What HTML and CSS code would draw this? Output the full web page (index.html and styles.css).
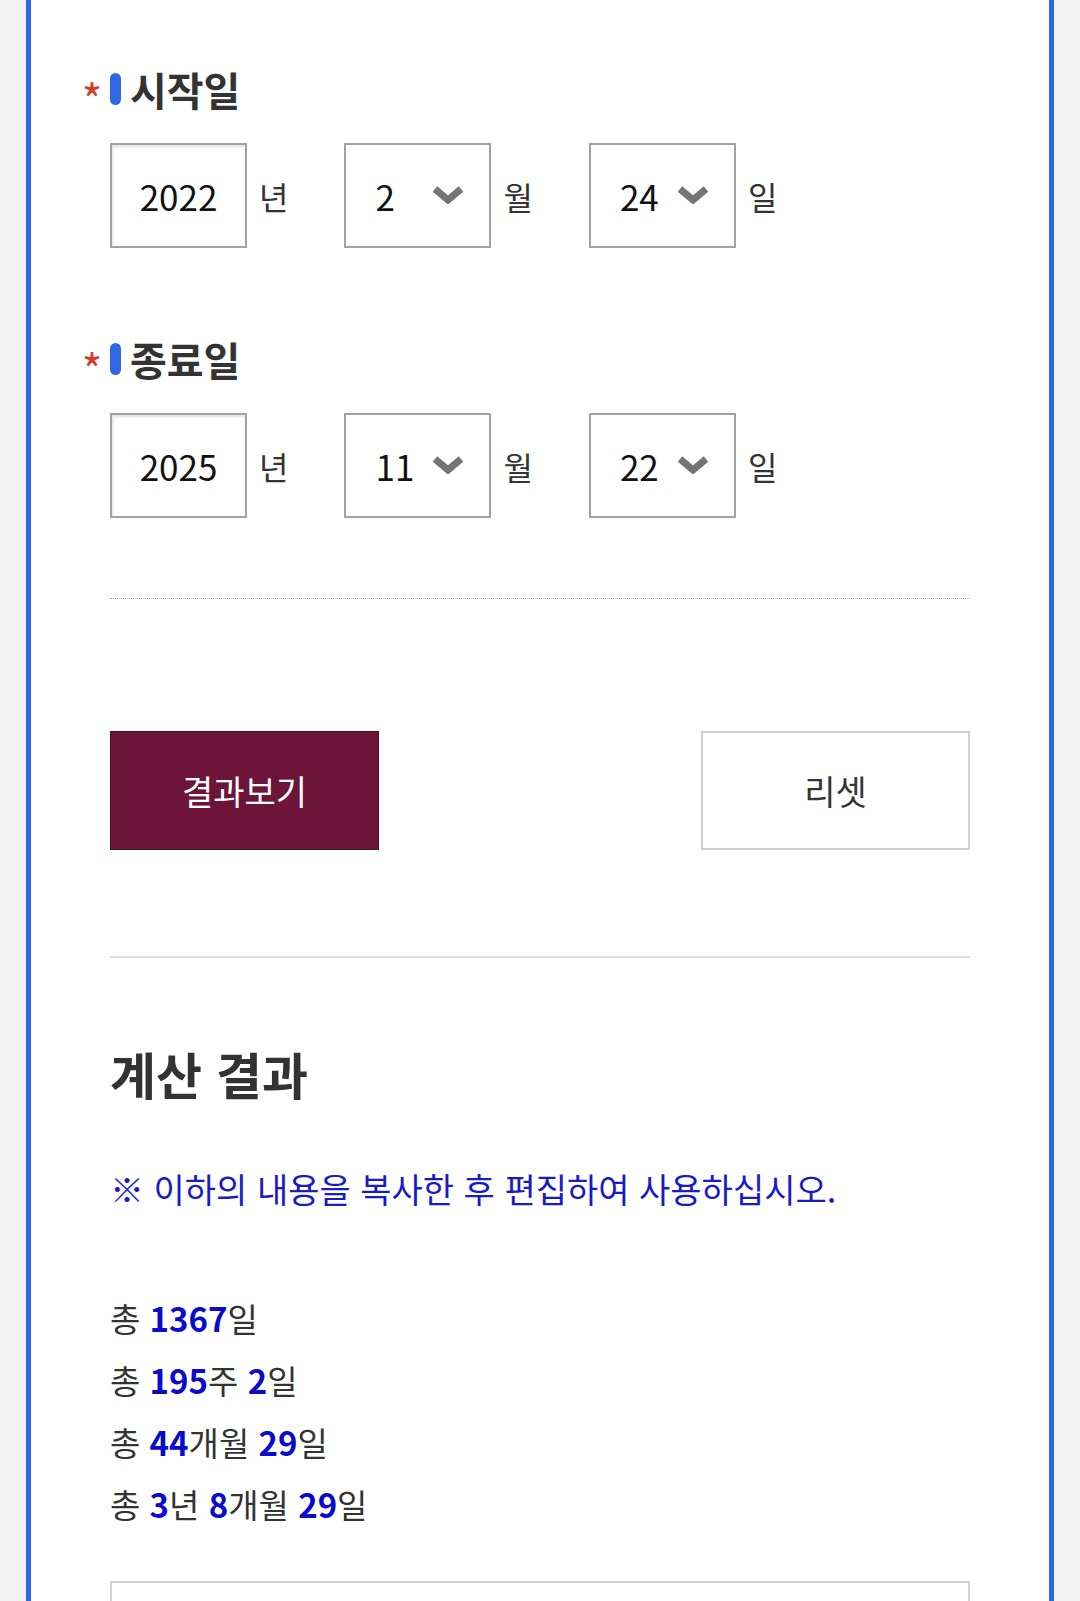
FILE: index.html
```html
<!DOCTYPE html>
<html lang="ko">
<head>
    <meta charset="UTF-8">
    <meta name="viewport" content="width=device-width, initial-scale=1.0">
    <title>날짜 계산기</title>
    <link rel="stylesheet" href="styles.css">
</head>
<body>
    <div class="page">
        <div class="card">
            <div class="field">
                <div class="label"><span class="req">*</span><span class="bar"></span><span class="label-text">시작일</span></div>
                <div class="date-row">
                    <input type="text" class="year" value="2022"><span class="unit">년</span>
                    <div class="sel">
                        <select><option>2</option></select>
                        <svg class="chev" width="32" height="18" viewBox="0 0 32 18"><polyline points="3,3 16,14 29,3" fill="none" stroke="#747474" stroke-width="7"/></svg>
                    </div><span class="unit">월</span>
                    <div class="sel">
                        <select><option>24</option></select>
                        <svg class="chev" width="32" height="18" viewBox="0 0 32 18"><polyline points="3,3 16,14 29,3" fill="none" stroke="#747474" stroke-width="7"/></svg>
                    </div><span class="unit">일</span>
                </div>
            </div>

            <div class="field second">
                <div class="label"><span class="req">*</span><span class="bar"></span><span class="label-text">종료일</span></div>
                <div class="date-row">
                    <input type="text" class="year" value="2025"><span class="unit">년</span>
                    <div class="sel">
                        <select><option>11</option></select>
                        <svg class="chev" width="32" height="18" viewBox="0 0 32 18"><polyline points="3,3 16,14 29,3" fill="none" stroke="#747474" stroke-width="7"/></svg>
                    </div><span class="unit">월</span>
                    <div class="sel">
                        <select><option>22</option></select>
                        <svg class="chev" width="32" height="18" viewBox="0 0 32 18"><polyline points="3,3 16,14 29,3" fill="none" stroke="#747474" stroke-width="7"/></svg>
                    </div><span class="unit">일</span>
                </div>
            </div>

            <hr class="dots">

            <div class="buttons">
                <button class="btn-go">결과보기</button>
                <button class="btn-reset">리셋</button>
            </div>

            <hr class="line">

            <h2>계산 결과</h2>
            <p class="notice">※ 이하의 내용을 복사한 후 편집하여 사용하십시오.</p>

            <div class="result">
                <p>총 <b>1367</b>일</p>
                <p>총 <b>195</b>주 <b>2</b>일</p>
                <p>총 <b>44</b>개월 <b>29</b>일</p>
                <p>총 <b>3</b>년 <b>8</b>개월 <b>29</b>일</p>
            </div>

            <div class="copy-box"></div>
        </div>
    </div>
</body>
</html>
```

FILE: styles.css
```css
*{
    margin: 0;
    padding: 0;
    box-sizing: border-box;
    font-family: "Noto Sans CJK KR", "Noto Sans", sans-serif;
}

body{
    background-color: #f3f3f3;
    overflow: hidden;
}

.page{
    padding: 0 26px;
}

.card{
    background-color: #fff;
    border-left: 5px solid #2f68e3;
    border-right: 5px solid #2f68e3;
    padding: 69px 79px 0 79px;
    min-height: 1601px;
}

/* labels */
.label{
    display: flex;
    align-items: center;
    height: 40px;
    margin-left: -30px;
}

.req{
    width: 24px;
    text-align: center;
    color: #d8392c;
    font-size: 44px;
    line-height: 40px;
    padding-top: 18px;
}

.bar{
    width: 11px;
    height: 32px;
    margin-left: 6px;
    border-radius: 6px;
    background-color: #2f68e3;
}

.label-text{
    margin-left: 9px;
    font-size: 40px;
    font-weight: 700;
    line-height: 40px;
    color: #333;
}

.field.second{
    margin-top: 91px;
}

/* date inputs */
.date-row{
    display: flex;
    align-items: center;
    margin-top: 34px;
    height: 105px;
}

.year, .sel select{
    height: 105px;
    border: 2px solid #a3a3a3;
    background-color: #fff;
    font-size: 35px;
    color: #111;
    outline: none;
}

.year{
    width: 137px;
    text-align: center;
    box-shadow: inset 1px 2px 3px rgba(0,0,0,0.12);
}

.sel{
    position: relative;
    width: 147px;
}

.sel select{
    width: 100%;
    padding-left: 29px;
    -webkit-appearance: none;
    appearance: none;
    border-radius: 0;
}

.chev{
    position: absolute;
    right: 27px;
    top: 43px;
    pointer-events: none;
}

.unit{
    font-size: 32px;
    color: #333;
    margin: 0 56px 0 12px;
}

/* separators */
.dots{
    border: none;
    border-top: 1px dotted #a8a8a8;
    margin-top: 80px;
}

.line{
    border: none;
    border-top: 2px solid #dcdcdc;
    margin-top: 106px;
}

/* buttons */
.buttons{
    display: flex;
    justify-content: space-between;
    margin-top: 132px;
}

.buttons button{
    width: 269px;
    height: 119px;
    font-size: 34px;
    cursor: pointer;
}

.btn-go{
    background-color: #6d1539;
    border: 1px solid #55102c;
    color: #fff;
}

.btn-reset{
    background-color: #fff;
    border: 2px solid #cfcfcf;
    color: #333;
}

/* result */
h2{
    margin-top: 84px;
    font-size: 50px;
    font-weight: 700;
    line-height: 62px;
    color: #333;
}

.notice{
    margin-top: 62px;
    font-size: 34px;
    line-height: 46px;
    color: #1a1ac8;
}

.result{
    margin-top: 75px;
}

.result p{
    font-size: 33px;
    line-height: 62px;
    color: #333;
}

.result b{
    color: #0a0acc;
    font-weight: 700;
}

.copy-box{
    margin-top: 46px;
    height: 200px;
    border: 2px solid #d0d0d0;
}
```
